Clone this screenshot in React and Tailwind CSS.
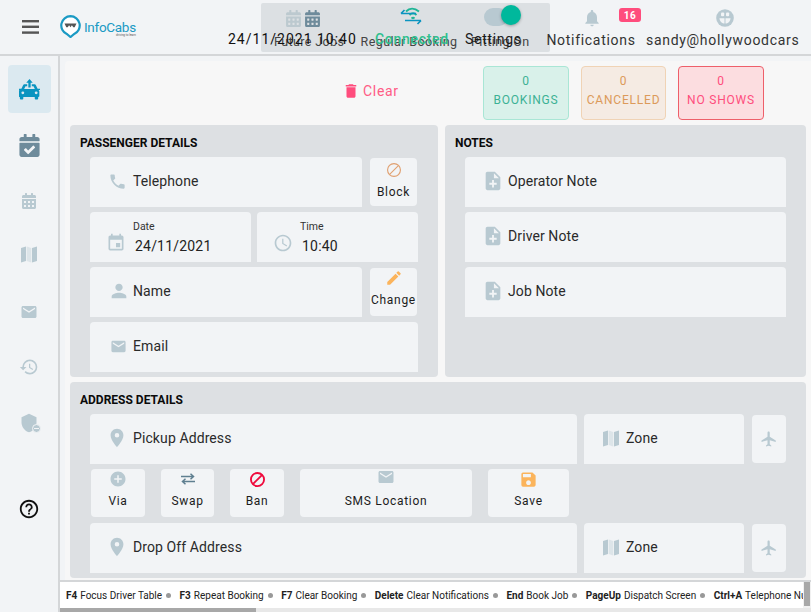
import { FaCalendarAlt, FaCalendarCheck } from "react-icons/fa";
import {
  MdAccessTime,
  MdAddCircle,
  MdDelete,
  MdEdit,
  MdEmail,
  MdEvent,
  MdFlight,
  MdHelpOutline,
  MdHistory,
  MdNoteAdd,
  MdNotifications,
  MdPerson,
  MdPhone,
  MdPlace,
  MdSave,
  MdShield,
} from "react-icons/md";

// Car with an upload arrow, first sidebar entry
const CarIcon = () => (
  <svg width="21" height="21" viewBox="0 0 22 22" fill="#0a94c0">
    <path d="M11 0l3.400 4H12.200v5h-2.400V4H7.600z" />
    <path d="M5.600 5.600h3v2H6.800L5.400 10.600h11.200L15.200 7.600h-1.800v-2h3c.6 0 1 .3 1.300.9l1.800 3.600H22v1.400h-1.500c.5.4.8 1 .8 1.700v4.600c0 .5-.4 1-1 1h-.2v1.600c0 .6-.4 1-1 1h-1.600c-.6 0-1-.4-1-1v-1.600H4.500v1.600c0 .6-.4 1-1 1H1.900c-.6 0-1-.4-1-1v-1.600h-.2c-.6 0-1-.5-1-1v-4.600c0-.7.3-1.300.8-1.700H0v-1.400h2.500l1.800-3.600c.3-.6.7-.9 1.300-.9zM4 13a1.500 1.500 0 100 3 1.500 1.500 0 000-3zm14 0a1.500 1.500 0 100 3 1.500 1.500 0 000-3z" />
  </svg>
);

const MenuIcon = () => (
  <svg width="17" height="14" viewBox="0 0 17 14" fill="#555">
    <rect width="17" height="2.400" />
    <rect y="5.600" width="17" height="2.400" />
    <rect y="11.400" width="17" height="2.400" />
  </svg>
);

const Logo = () => (
  <div className="flex items-center gap-[3px]">
    <svg width="21" height="23" viewBox="0 0 21 23">
      <path d="M10.500 1.200a9.300 9.300 0 00-3.700 17.800l3.700 3 3.700-3a9.300 9.300 0 00-3.700-17.800z" fill="#fff" stroke="#1b9ac4" strokeWidth="2.200" />
      <path d="M4.500 8.500h12l-1.800 3.800h-1.400l-1.400-2-1.400 2-1.400-2-1.400 2H6.300z" fill="#555" />
    </svg>
    <div className="flex flex-col items-end pt-[3px]">
      <span className="text-[13.500px] leading-[14px] tracking-[-0.3px] text-[#1b9ac4]">InfoCabs</span>
      <span className="text-[3px] leading-[3px] text-[#555]">driving to learn</span>
    </div>
  </div>
);

const ConnectedIcon = () => (
  <svg width="24" height="18" viewBox="0 0 24 18" fill="none">
    <path d="M7 4.500c3.500-3.600 8.500-3.600 13 0M10.500 8c2.500-2.200 4.800-2.200 7 0M12.500 11.500c1.200-1 2-1 3 0" stroke="#1fb596" strokeWidth="1.900" />
    <path d="M2 6.500h15M5.500 3L2 6.500M22 13.500H6M18.500 17L22 13.500" stroke="#0a94c0" strokeWidth="1.700" />
  </svg>
);

const ShieldIcon = () => (
  <div className="relative h-[20px] w-[20px]">
    <MdShield size={20} color="#b8c9d1" />
    <span className="absolute bottom-[0px] right-[-2px] flex h-[9px] w-[9px] items-center justify-center rounded-full border border-[#f2f4f6] bg-[#b8c9d1]">
      <span className="h-[1px] w-[5px] bg-[#f2f4f6]" />
    </span>
  </div>
);

const MapIcon = () => (
  <svg width="16" height="17" viewBox="0 0 16 17" fill="#b8c9d1">
    <path d="M0 2l5-1.500v14.500L0 16.500z" />
    <path d="M5.700.5l4.600 1.500v14.500l-4.600-1.500z" opacity="0.35" />
    <path d="M11 2l5-1.500V15l-5 1.500z" />
  </svg>
);

const SlashCircle = ({ size, color, width }) => (
  <svg width={size} height={size} viewBox="0 0 16 16" fill="none" stroke={color} strokeWidth={width}>
    <circle cx="8" cy="8" r={8 - width / 2} />
    <path d="M3 13L13 3" />
  </svg>
);

const SwapIcon = () => (
  <svg width="14" height="12" viewBox="0 0 14 12" fill="none" stroke="#5f7f90" strokeWidth="1.500">
    <path d="M0 3.500h12.500M9.500 .8l3 2.700-3 2.700" />
    <path d="M14 8.500H1.500M4.500 5.800l-3 2.700 3 2.700" />
  </svg>
);

const UserFaceIcon = () => (
  <svg width="18" height="18" viewBox="0 0 18 18">
    <circle cx="9" cy="9" r="8.800" fill="#b8c9d1" />
    <rect x="5" y="3.500" width="3.200" height="3.800" rx="1" fill="#f2f4f6" />
    <rect x="10" y="3.500" width="3.200" height="3.800" rx="1" fill="#f2f4f6" />
    <path d="M3.500 9.200h11c0 3-2.400 5.300-5.500 5.300s-5.500-2.300-5.500-5.300z" fill="#f2f4f6" />
    <path d="M9 9v6" stroke="#b8c9d1" strokeWidth="1" />
  </svg>
);

const SideItem = ({ children, className = "" }) => (
  <div className={`flex h-[55.500px] items-center justify-center ${className}`}>{children}</div>
);

const Field = ({ icon, label, className = "" }) => (
  <div className={`flex h-[50px] items-start rounded-t-[4px] bg-[#f2f4f6] pl-[20px] pt-[14px] ${className}`}>
    <span className="flex h-[20px] w-[23px] items-center justify-start">{icon}</span>
    <span className="text-[14px] leading-[20px] tracking-[0.1px] text-[#2a2a2a]">{label}</span>
  </div>
);

const DateField = ({ icon, label, value, className = "" }) => (
  <div className={`flex h-[50px] flex-1 items-end rounded-t-[4px] bg-[#f2f4f6] pb-[6px] ${className}`}>
    <span className="mb-[3px] flex h-[20px] items-center">{icon}</span>
    <div className="flex flex-col">
      <span className="mb-[3px] text-[10.500px] leading-[12px] text-[#333]">{label}</span>
      <span className="pl-[2px] text-[14px] leading-[20px] tracking-[0.2px] text-[#222]">{value}</span>
    </div>
  </div>
);

const SideButton = ({ icon, label, className = "" }) => (
  <div className={`flex h-[48px] flex-col items-center rounded-[4px] bg-[#f2f4f6] ${className}`}>
    <span className="flex h-[20px] items-center">{icon}</span>
    <span className="mt-[4px] text-[12px] leading-[16px] tracking-[0.7px] text-[#1c1c1c]">{label}</span>
  </div>
);

const PlaneButton = () => (
  <div className="flex h-[48px] w-[34px] items-center justify-center rounded-[4px] bg-[#f2f4f6]">
    <MdFlight size={18} color="#b8c9d1" />
  </div>
);

const StatBox = ({ value, label, className }) => (
  <div className={`flex h-[54px] flex-col items-center justify-center rounded-[4px] border pb-[6px] text-[12px] leading-[18px] tracking-[0.8px] ${className}`}>
    <span className="mb-[1px]">{value}</span>
    <span>{label}</span>
  </div>
);

const Shortcut = ({ k, label }) => (
  <span className="flex shrink-0 items-center gap-[3px] pr-[8.500px]">
    <b className="font-bold">{k}</b>
    <span>{label}</span>
    <span className="ml-[1px] h-[5px] w-[5px] rounded-full bg-[#999]" />
  </span>
);

const App = () => {
  const ic = "#b8c9d1";

  return (
    <div className="flex h-[612px] w-[811px] flex-col overflow-hidden bg-[#f2f4f6] font-['Roboto',sans-serif]">
      {/* top bar */}
      <header className="relative flex h-[56px] shrink-0 border-b-2 border-[#d4d6d8]">
        <div className="flex items-start pl-[22px] pt-[15px]">
          <span className="mt-[5px]"><MenuIcon /></span>
          <div className="ml-[21px]">
            <Logo />
          </div>
        </div>

        {/* shortcut strip, sits under the status texts */}
        <div className="absolute left-[261px] top-[3px] flex h-[49px] w-[289px] rounded-[2px] bg-[#dce0e3] text-[12.500px] tracking-[0.4px] text-[#444]">
          <div className="flex w-[97px] flex-col items-start pl-[11px] pt-[4px]">
            <div className="flex h-[24px] items-center gap-[2px] pl-[13px]">
              <FaCalendarAlt size={17} color="#bcc9cf" />
              <FaCalendarAlt size={17} color="#6e8b9b" />
            </div>
            <span className="mt-[4px] whitespace-nowrap pl-[2px]">Future Jobs</span>
          </div>
          <div className="flex w-[100px] flex-col items-center pt-[4px]">
            <span className="flex h-[24px] items-center pb-[4px] pl-[5px]">
              <ConnectedIcon />
            </span>
            <span className="mt-[4px] whitespace-nowrap pl-[2px]">Regular Booking</span>
          </div>
          <div className="flex flex-1 flex-col items-start pl-[17px] pt-[4px]">
            <div className="relative h-[24px] w-[40px]">
              <div className="absolute left-[9px] top-[1px] h-[18px] w-[24px] rounded-full bg-[#b8c9d1]" />
              <div className="absolute left-[26px] top-[-2px] h-[20px] w-[20px] rounded-full bg-[#00b89c] shadow-[0_1px_3px_rgba(0,0,0,0.3)]" />
            </div>
            <span className="-ml-[4px] mt-[4px] whitespace-nowrap">Pitting On</span>
          </div>
        </div>

        <div className="absolute left-[228px] top-[30px] whitespace-nowrap text-[14px] leading-[18px] tracking-[1px] text-[#111]">24/11/2021 10:40</div>
        <div className="absolute left-[375px] top-[30px] text-[14px] leading-[18px] tracking-[0.7px] font-medium text-[#2fbf8e]">Connected</div>
        <div className="absolute left-[465px] top-[30px] text-[14px] leading-[18px] tracking-[0.7px] text-[#1a1a1a]">Settings</div>

        <div className="absolute left-[546px] top-[5px] flex w-[90px] flex-col items-center">
          <div className="flex h-[26px] items-center pl-[1px]">
            <MdNotifications size={20} color={ic} />
          </div>
          <span className="text-[14px] leading-[18px] tracking-[0.7px] text-[#333]">Notifications</span>
          <span className="absolute left-[73px] top-[3px] flex h-[14px] w-[22px] items-center justify-center rounded-[3px] bg-[#ff4d7d] text-[10px] font-bold tracking-[0.6px] text-white">16</span>
        </div>
        <div className="absolute left-[646px] top-[5px] flex flex-col items-center">
          <div className="flex h-[26px] items-center pl-[4px]">
            <UserFaceIcon />
          </div>
          <span className="whitespace-nowrap text-[14px] leading-[18px] tracking-[0.7px] text-[#333]">sandy@hollywoodcars</span>
        </div>
      </header>

      <div className="flex min-h-0 flex-1">
        {/* sidebar */}
        <aside className="flex w-[60px] shrink-0 flex-col items-center border-r-2 border-[#d4d6d8] pt-[9px]">
          <div className="mb-[5px] flex h-[48px] w-[43px] items-center justify-center rounded-[4px] bg-[#dbe9f0]">
            <CarIcon />
          </div>
          <SideItem><FaCalendarCheck size={23} color="#6e8b9b" /></SideItem>
          <SideItem><FaCalendarAlt size={16} color={ic} /></SideItem>
          <SideItem className="-mt-[2px]"><MapIcon /></SideItem>
          <SideItem className="mt-[2px]"><MdEmail size={18} color={ic} /></SideItem>
          <SideItem className="-mt-[1px]"><MdHistory size={20} color={ic} /></SideItem>
          <SideItem className="mt-[1px]"><ShieldIcon /></SideItem>
          <div className="mt-[47px]">
            <MdHelpOutline size={22} color="#111" />
          </div>
        </aside>

        <main className="flex min-w-0 flex-1 flex-col">
          <div className="min-h-0 flex-1 overflow-hidden pl-[5px] pt-[5px]">
            <div className="h-full rounded-tl-[4px] bg-[#f7f7f7] px-[5px] pt-[5px]">
              {/* counters */}
              <div className="flex h-[54px] items-center">
                <div className="ml-[274px] flex w-[56px] items-center gap-[3px] pb-[4px] text-[14px] tracking-[0.7px] text-[#ff4d7d]">
                  <MdDelete size={18} className="-ml-[2px] shrink-0" />
                  <span className="text-[#ff5c85]">Clear</span>
                </div>
                <StatBox value="0" label="BOOKINGS" className="ml-[83px] w-[86px] border-[#a9e6d5] bg-[#d9f1ea] text-[#3cb195]" />
                <StatBox value="0" label="CANCELLED" className="ml-[12px] w-[85px] border-[#f0d3b5] bg-[#f5ebe3] text-[#dc9a5a]" />
                <StatBox value="0" label="NO SHOWS" className="ml-[12px] w-[86px] border-[#ee5f6a] bg-[#fcdde0] text-[#ff4d7d]" />
              </div>

              <div className="mt-[5px] flex gap-[7px]">
                {/* passenger */}
                <section className="h-[252px] w-[368px] rounded-[4px] bg-[#dde0e3] px-[20px]">
                  <h2 className="-ml-[10px] h-[32px] pt-[11px] text-[12px] leading-[14px] font-bold text-[#0a0a0a]">PASSENGER DETAILS</h2>
                  <div className="flex flex-col gap-[5px]">
                    <div className="flex items-center gap-[8px]">
                      <Field icon={<MdPhone size={19} color={ic} className="-ml-[2px]" />} label="Telephone" className="flex-1" />
                      <SideButton icon={<SlashCircle size={14} color="#e0a070" width={1.300} />} label="Block" className="mr-[1px] w-[47px] pt-[2px]" />
                    </div>
                    <div className="flex gap-[6px]">
                      <DateField icon={<MdEvent size={20} color={ic} className="mr-[7px]" />} label="Date" value="24/11/2021" className="pl-[16px]" />
                      <DateField icon={<MdAccessTime size={20} color={ic} className="mr-[7px]" />} label="Time" value="10:40" className="pl-[16px]" />
                    </div>
                    <div className="flex items-center gap-[8px]">
                      <Field icon={<MdPerson size={22} color={ic} className="-ml-[2px]" />} label="Name" className="flex-1" />
                      <SideButton icon={<MdEdit size={18} color="#fbb45c" />} label="Change" className="mr-[1px] w-[47px]" />
                    </div>
                    <Field icon={<MdEmail size={17} color={ic} />} label="Email" />
                  </div>
                </section>

                {/* notes */}
                <section className="h-[252px] w-[361px] rounded-[4px] bg-[#dde0e3] px-[20px]">
                  <h2 className="-ml-[10px] h-[32px] pt-[11px] text-[12px] leading-[14px] font-bold text-[#0a0a0a]">NOTES</h2>
                  <div className="flex flex-col gap-[5px]">
                    <Field icon={<MdNoteAdd size={22} color={ic} className="-ml-[3px]" />} label="Operator Note" />
                    <Field icon={<MdNoteAdd size={22} color={ic} className="-ml-[3px]" />} label="Driver Note" />
                    <Field icon={<MdNoteAdd size={22} color={ic} className="-ml-[3px]" />} label="Job Note" />
                  </div>
                </section>
              </div>

              {/* address */}
              <section className="mt-[5px] h-[196px] w-[736px] rounded-[4px] bg-[#dde0e3] px-[20px]">
                <h2 className="-ml-[10px] h-[32px] pt-[11px] text-[12px] leading-[14px] font-bold text-[#0a0a0a]">ADDRESS DETAILS</h2>
                <div className="flex flex-col gap-[5px]">
                  <div className="flex items-center">
                    <Field icon={<MdPlace size={22} color={ic} className="-ml-[4px]" />} label="Pickup Address" className="w-[487px]" />
                    <Field icon={<MapIcon />} label="Zone" className="ml-[7px] w-[160px] !pl-[19px]" />
                    <div className="ml-[8px]"><PlaneButton /></div>
                  </div>
                  <div className="mb-[1px] flex pl-[1px]">
                    <SideButton icon={<MdAddCircle size={18} color={ic} />} label="Via" className="w-[54px]" />
                    <SideButton icon={<SwapIcon />} label="Swap" className="ml-[16px] w-[53px]" />
                    <SideButton icon={<SlashCircle size={15} color="#ef0a3c" width={2} />} label="Ban" className="ml-[16px] w-[54px]" />
                    <SideButton icon={<MdEmail size={18} color={ic} className="-mt-[4px]" />} label="SMS Location" className="ml-[16px] w-[172px]" />
                    <SideButton icon={<MdSave size={19} color="#fbb45c" />} label="Save" className="ml-[16px] w-[81px]" />
                  </div>
                  <div className="flex items-center">
                    <Field icon={<MdPlace size={22} color={ic} className="-ml-[4px]" />} label="Drop Off Address" className="w-[487px]" />
                    <Field icon={<MapIcon />} label="Zone" className="ml-[7px] w-[160px] !pl-[19px]" />
                    <div className="ml-[8px]"><PlaneButton /></div>
                  </div>
                </div>
              </section>
            </div>
          </div>

          {/* shortcuts footer */}
          <footer className="relative h-[32px] shrink-0 border-t-2 border-[#d4d6d8] bg-white">
            <div className="flex h-[26px] items-center overflow-hidden whitespace-nowrap pl-[6px] text-[10px] text-[#222]">
              <Shortcut k="F4" label="Focus Driver Table" />
              <Shortcut k="F3" label="Repeat Booking" />
              <Shortcut k="F7" label="Clear Booking" />
              <Shortcut k="Delete" label="Clear Notifications" />
              <Shortcut k="End" label="Book Job" />
              <Shortcut k="PageUp" label="Dispatch Screen" />
              <Shortcut k="Ctrl+A" label="Telephone Number" />
            </div>
            <div className="h-[4px] bg-[#e8e8e8]">
              <div className="h-full w-[196px] bg-[#a8a8a8]" />
            </div>
            <div className="absolute right-0 top-0 h-[26px] w-[8px] bg-[#f1f1f1] px-[1px]">
              <div className="h-[24px] w-full bg-[#a8a8a8]" />
            </div>
          </footer>
        </main>
      </div>
    </div>
  );
};

export default App;
